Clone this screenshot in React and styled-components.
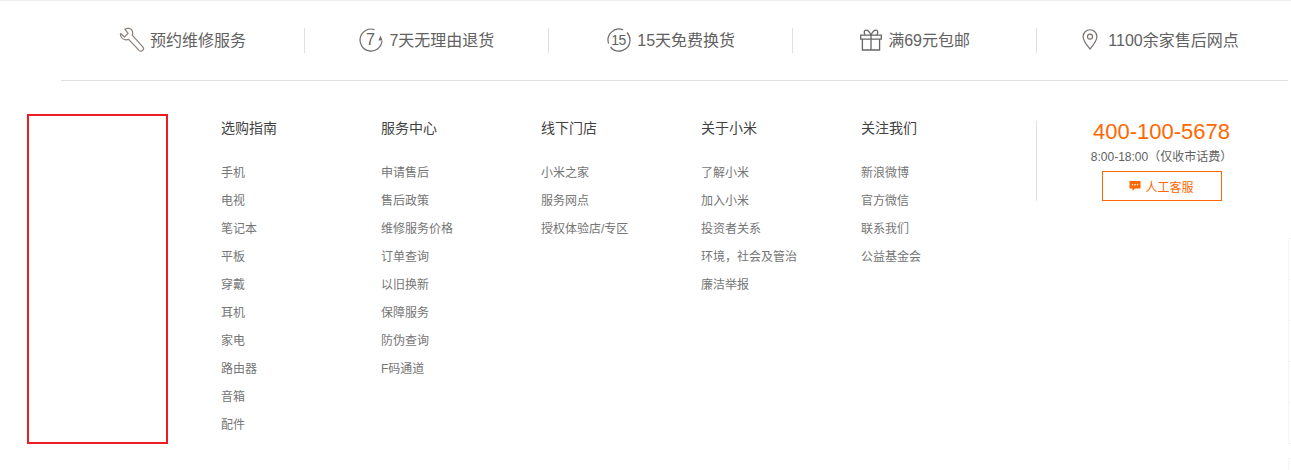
import styled, { createGlobalStyle } from "styled-components";

const GlobalStyle = createGlobalStyle`
  body {
    margin: 0;
    background: #fff;
    font-family: "Liberation Sans", "Noto Sans CJK SC", sans-serif;
  }
`;

const services = [
  { label: "预约维修服务", icon: <WrenchIcon />, gap: 5, shift: 0 },
  { label: "7天无理由退货", icon: <SevenIcon />, gap: 6, shift: 1 },
  { label: "15天免费换货", icon: <FifteenIcon />, gap: 6, shift: 2 },
  { label: "满69元包邮", icon: <GiftIcon />, gap: 6, shift: 2 },
  { label: "1100余家售后网点", icon: <PinIcon />, gap: 10, shift: 4 },
];

const columns = [
  {
    title: "选购指南",
    links: ["手机", "电视", "笔记本", "平板", "穿戴", "耳机", "家电", "路由器", "音箱", "配件"],
  },
  {
    title: "服务中心",
    links: ["申请售后", "售后政策", "维修服务价格", "订单查询", "以旧换新", "保障服务", "防伪查询", "F码通道"],
  },
  { title: "线下门店", links: ["小米之家", "服务网点", "授权体验店/专区"] },
  { title: "关于小米", links: ["了解小米", "加入小米", "投资者关系", "环境，社会及管治", "廉洁举报"] },
  { title: "关注我们", links: ["新浪微博", "官方微信", "联系我们", "公益基金会"] },
];

function WrenchIcon() {
  return (
    <svg width="26" height="26" viewBox="0 0 26 26" fill="none" stroke="#8a8078" strokeWidth="1.2" strokeLinejoin="round">
      <path d="M1.500 6.500 5.500 10l3.600-3.600L5.800 2.200C8.600.6 11.800 1.200 13 3.400c.9 1.600.8 3.200.2 4.800l10.600 11.600c1 1.200.9 2.600-.1 3.600-1 1-2.500 1-3.600 0L9.600 12.400c-2 .7-4.200.6-6-.8C1.900 10.200 1.200 8.400 1.500 6.500Z" />
    </svg>
  );
}

function SevenIcon() {
  return (
    <svg width="24" height="24" viewBox="0 0 24 24" fill="none">
      <path d="M15.500 1.600A11 11 0 1 0 23 13" stroke="#6e6a68" strokeWidth="1.200" />
      <path d="M21.500 7.500 23.500 12.500h-4Z" fill="#6e6a68" />
      <DayNumber x="11.500" y="17" textAnchor="middle">7</DayNumber>
    </svg>
  );
}

function FifteenIcon() {
  return (
    <svg width="24" height="24" viewBox="0 0 24 24" fill="none" stroke="#6e6a68" strokeWidth="1.200">
      <path d="M16 1.800A11 11 0 0 0 1.600 15.500" />
      <path d="M3.500 19A11 11 0 0 0 23 12 11 11 0 0 0 20 4.500" />
      <DayNumber x="11.500" y="17" textAnchor="middle" stroke="none" $tight>15</DayNumber>
    </svg>
  );
}

function GiftIcon() {
  return (
    <svg width="22" height="22" viewBox="0 0 22 22" fill="none" stroke="#666" strokeWidth="1.300">
      <path d="M.7 6.200h20.600v4H.7ZM2.400 10.200h17.200v10.800H2.400ZM11 6.200V21" />
      <path d="M11 6.200C9.500 2.800 7.600 1 5.800 1.200 4 1.400 3.700 4 5.200 6.200M11 6.200c1.500-3.400 3.400-5.200 5.200-5 1.800.2 2.100 2.800.6 5" />
    </svg>
  );
}

function PinIcon() {
  return (
    <svg width="16" height="21" viewBox="0 0 16 22" fill="none" stroke="#77706c" strokeWidth="1.200">
      <path d="M8 21C4 16 .8 12.300.8 8a7.200 7.200 0 0 1 14.400 0C15.200 12.300 12 16 8 21Z" />
      <circle cx="8" cy="8" r="2.600" />
    </svg>
  );
}

function ChatIcon() {
  return (
    <svg width="12" height="12" viewBox="0 0 12 12">
      <path d="M.5 1h11v7.500H6L3.500 11V8.500H.5Z" fill="#ff6700" />
      <circle cx="3.500" cy="4.700" r=".8" fill="#fff" />
      <circle cx="6" cy="4.700" r=".8" fill="#fff" />
      <circle cx="8.500" cy="4.700" r=".8" fill="#fff" />
    </svg>
  );
}

export default function App() {
  return (
    <Page>
      <GlobalStyle />
      <ServiceBar>
        {services.map((s) => (
          <ServiceItem key={s.label} $gap={s.gap} $shift={s.shift}>
            {s.icon}
            <ServiceLabel>{s.label}</ServiceLabel>
          </ServiceItem>
        ))}
      </ServiceBar>
      <Footer>
        <LogoFrame />
        <LinkColumns>
          {columns.map((col) => (
            <LinkColumn key={col.title}>
              <ColumnTitle>{col.title}</ColumnTitle>
              {col.links.map((link) => (
                <LinkItem key={link} href="#">
                  {link}
                </LinkItem>
              ))}
            </LinkColumn>
          ))}
        </LinkColumns>
        <Contact>
          <Phone>400-100-5678</Phone>
          <Hours>8:00-18:00（仅收市话费）</Hours>
          <ServiceBtn href="#">
            <ChatIcon />
            人工客服
          </ServiceBtn>
        </Contact>
      </Footer>
      {/* fixed side toolbar, only its left edge shows */}
      <SideDock>
        {[0, 1, 2, 3, 4].map((i) => (
          <DockItem key={i} />
        ))}
      </SideDock>
      <DockTop />
    </Page>
  );
}

const Page = styled.div`
  position: relative;
  width: 1291px;
  height: 470px;
  overflow: hidden;
  border-top: 1px solid #f0f0f0;
  box-sizing: border-box;
`;

const ServiceBar = styled.div`
  display: grid;
  grid-template-columns: repeat(5, 243.9px);
  align-items: center;
  width: 1227px;
  height: 80px;
  margin-left: 61px;
  box-sizing: border-box;
  border-bottom: 1px solid #e0e0e0;
`;

const ServiceItem = styled.div`
  display: flex;
  align-items: center;
  justify-content: center;
  gap: ${({ $gap }) => $gap}px;
  height: 25px;
  padding-left: ${({ $shift }) => $shift}px;
  font-size: 16px;
  color: #616161;
  border-right: 1px solid #e0e0e0;

  &:last-child {
    border-right: none;
  }

  svg {
    margin-bottom: 2px;
  }
`;

const ServiceLabel = styled.span`
  padding-bottom: 4px;
`;

const DayNumber = styled.text`
  font-family: "Liberation Sans", sans-serif;
  font-size: ${({ $tight }) => ($tight ? "14px" : "16px")};
  letter-spacing: ${({ $tight }) => ($tight ? "-0.5px" : "0")};
  fill: #616161;
`;

const Footer = styled.div`
  display: flex;
  align-items: flex-start;
  padding: 33px 0 0 27px;
`;

const LogoFrame = styled.div`
  width: 141px;
  height: 330px;
  box-sizing: border-box;
  border: 2px solid #ed1c24;
  flex-shrink: 0;
`;

const LinkColumns = styled.div`
  display: flex;
  margin-left: 53px;
  padding-top: 6px;
  width: 815px;
`;

const LinkColumn = styled.div`
  display: flex;
  flex-direction: column;
  align-items: flex-start;
  width: 160px;
`;

const ColumnTitle = styled.div`
  font-size: 14px;
  line-height: 16px;
  color: #424242;
  margin-bottom: 23px;
`;

const LinkItem = styled.a`
  font-size: 12px;
  line-height: 28px;
  color: #757575;
  text-decoration: none;
`;

const Contact = styled.div`
  display: flex;
  flex-direction: column;
  align-items: center;
  width: 250px;
  height: 80px;
  margin-top: 7px;
  border-left: 1px solid #e0e0e0;
  box-sizing: border-box;
`;

const Phone = styled.div`
  font-size: 22px;
  line-height: 22px;
  color: #ff6700;
`;

const Hours = styled.div`
  font-size: 12px;
  line-height: 16px;
  margin-top: 6px;
  color: #616161;
  text-spacing-trim: space-all;
`;

const ServiceBtn = styled.a`
  display: flex;
  align-items: center;
  justify-content: center;
  gap: 4px;
  width: 120px;
  height: 30px;
  box-sizing: border-box;
  margin-top: 6px;
  border: 1px solid #ff6700;
  font-size: 12px;
  color: #ff6700;
  text-decoration: none;
`;

const SideDock = styled.div`
  position: absolute;
  top: 237px;
  left: 1288px;
  width: 3px;
  display: flex;
  flex-direction: column;
  border-top: 1px solid #f5f5f5;
`;

const DockItem = styled.div`
  height: 40px;
  border-left: 1px solid #f5f5f5;
  border-bottom: 1px solid #f5f5f5;
`;

const DockTop = styled.div`
  position: absolute;
  top: 457px;
  left: 1288px;
  width: 3px;
  height: 13px;
  box-sizing: border-box;
  border-left: 1px solid #f5f5f5;
  border-top: 1px solid #f5f5f5;
`;
